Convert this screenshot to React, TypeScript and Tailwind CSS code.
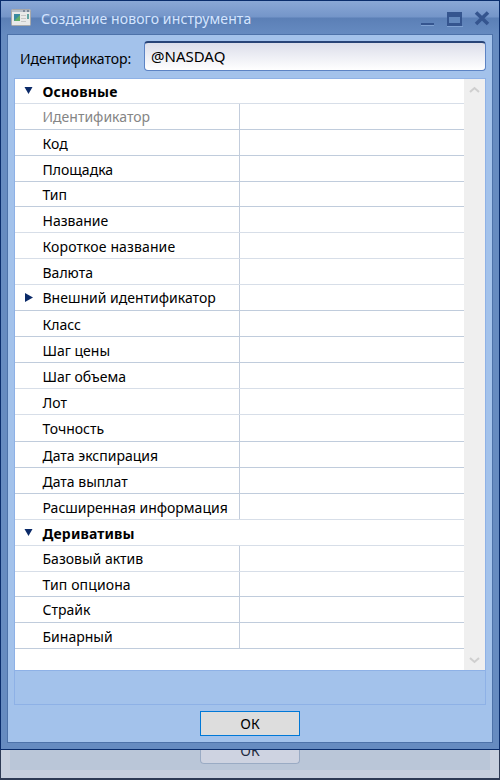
import React from "react";

type Row = { label: string; h: string; kind?: "group" | "expand" | "muted"; soft?: boolean; wide?: boolean; high?: boolean };

const rows: Row[] = [
  { label: "Основные", h: "h-[25px]", kind: "group", soft: true },
  { label: "Идентификатор", h: "h-[26px]", kind: "muted", high: true },
  { label: "Код", h: "h-[26px]" },
  { label: "Площадка", h: "h-[26px]" },
  { label: "Тип", h: "h-[25px]" },
  { label: "Название", h: "h-[26px]", soft: true },
  { label: "Короткое название", h: "h-[26px]", wide: true, soft: true },
  { label: "Валюта", h: "h-[26px]", soft: true },
  { label: "Внешний идентификатор", h: "h-[26px]", kind: "expand", high: true },
  { label: "Класс", h: "h-[26px]" },
  { label: "Шаг цены", h: "h-[26px]" },
  { label: "Шаг объема", h: "h-[26px]", soft: true },
  { label: "Лот", h: "h-[26px]", soft: true },
  { label: "Точность", h: "h-[27px]" },
  { label: "Дата экспирация", h: "h-[26px]" },
  { label: "Дата выплат", h: "h-[26px]" },
  { label: "Расширенная информация", h: "h-[26px]", soft: true },
  { label: "Деривативы", h: "h-[26px]", kind: "group", soft: true },
  { label: "Базовый актив", h: "h-[26px]", soft: true, high: true },
  { label: "Тип опциона", h: "h-[25px]", wide: true },
  { label: "Страйк", h: "h-[26px]", high: true },
  { label: "Бинарный", h: "h-[26px]" },
];

function PropertyRow({ row }: { row: Row }) {
  const group = row.kind === "group";
  return (
    <div className={`flex shrink-0 border-b ${row.h} ${row.soft ? "border-[#d7dee8]" : "border-[#c0ccdc]"}`}>
      <div className={`flex w-[225px] items-center ${group ? "" : "border-r border-[#c3cddc]"}`}>
        <span className="flex w-7 shrink-0 justify-center">
          {group && <svg width="9" height="7" className="mb-[1px] mr-px"><path d="M.5 0h8L4.5 7z" fill="#0b2a68" /></svg>}
          {row.kind === "expand" && <svg width="8" height="9"><path d="M0 0v9l8-4.5z" fill="#0b2a68" /></svg>}
        </span>
        <span className={`-ml-[0.5px] whitespace-nowrap ${row.high ? "" : "pt-[2px]"} ${group ? "font-bold tracking-[0.15px]" : row.wide ? "tracking-[0.12px]" : ""} ${row.kind === "muted" ? "text-[#858585]" : ""}`}>{row.label}</span>
      </div>
    </div>
  );
}

export default function App() {
  return (
    <div className="h-[780px] w-[500px] overflow-hidden bg-[#c8cfde] font-['Noto_Sans','Open_Sans',sans-serif] text-[14px] leading-5 text-black">
      <div className="flex h-[750px] flex-col border border-[#0a2d6c] bg-[#668bc0]">
        <header className="flex h-[33px] shrink-0 items-center bg-[linear-gradient(to_bottom,#8aa8d6_0px,#7495c9_16px,#5b7fb6_17px,#658ac0_32px)] pl-[10px]">
          <svg width="20" height="17" className="mt-[-1px]">
            <rect x=".5" y=".5" width="19" height="16" rx="1" fill="#e9e9e9" stroke="#a9a9a9" />
            <path d="M1 1h18v2H1z" fill="#b9c0ca" />
            <path d="M12 1h2v2h-2zM16 1h2v2h-2z" fill="#7d8798" />
            <rect x="3" y="5" width="6" height="7" fill="#398aa0" />
            <path d="M3 12L9 6v6H3z" fill="#62ad68" />
            <path d="M10 6.5h5M10 9.5h5M10 12.5h5" stroke="#c7c7c7" />
            <path d="M16 5h2v5h-2z" fill="#65a5a4" />
          </svg>
          <h1 className="ml-[10px] flex-1 whitespace-nowrap pt-[2px] tracking-[0.11px] text-[#d5e5ff]">Создание нового инструмента</h1>
          <svg width="76" height="24" fill="none" className="mr-[2px]">
            <path d="M0 19.5h13M26 20.5h16" stroke="#7fa1d2" />
            <path d="M0 18h13" stroke="#35558f" strokeWidth="2" />
            <path d="M26 6h15v14H26z" fill="#35558f" />
            <path d="M28 11h11v6H28z" fill="#6388bd" />
            <path d="M55 6.5l12 11.5M67 6.5L55 18" stroke="#35558f" strokeWidth="3.6" />
          </svg>
        </header>
        <main className="mx-[6px] flex h-[709px] shrink-0 flex-col border border-[#4d72a9] bg-[#a3c2eb] px-[6px]">
          <div className="flex h-[43px] shrink-0 pt-[6px]">
            <label className="w-[130px] shrink-0 pl-[6px] pt-[8px]">Идентификатор:</label>
            <div className="h-[30px] w-[342px] shrink-0 rounded-[4px] border border-t-2 border-[#5c83c4] border-t-[#284477] bg-linear-to-b from-[#dcdeea] to-white pl-[6px] pt-[3px] text-[15px]">@NASDAQ</div>
          </div>
          <section className="flex h-[593px] shrink-0 border border-[#8eb1e6] bg-white">
            <div className="flex w-[449px] flex-col">
              {rows.map((row) => <PropertyRow key={row.label} row={row} />)}
            </div>
            <div className="flex flex-1 flex-col justify-between bg-[#efefef] pb-[5px] pt-[7px]">
              <svg width="21" height="10" fill="none"><path d="M6 6l4.5-4L15 6" stroke="#cfcfcf" strokeWidth="2" /></svg>
              <svg width="21" height="8" fill="none"><path d="M6 1l4.5 4L15 1" stroke="#cfcfcf" strokeWidth="2" /></svg>
            </div>
          </section>
          <div className="h-[34px] shrink-0 border border-t-0 border-[#8eb1e6]" />
          <button className="mx-auto mt-[6px] h-[25px] w-[100px] border border-[#0078d7] bg-[#dddddd]">ОК</button>
        </main>
      </div>
      <footer className="h-[30px] border-x border-b-2 border-[#303b55] px-[9px]">
        <div className="flex h-5 justify-center bg-[#bac6d8]">
          <div className="h-[14px] w-[100px] overflow-hidden rounded-b-[4px] border border-t-0 border-[#9aabc4] bg-[#ced3e1] text-center text-[#222b40]"><span className="-mt-[9px] block">ОК</span></div>
        </div>
      </footer>
    </div>
  );
}
